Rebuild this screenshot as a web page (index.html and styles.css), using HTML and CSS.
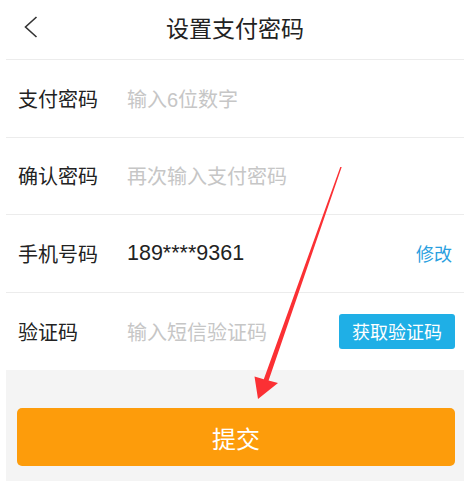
FILE: index.html
```html
<!DOCTYPE html>
<html lang="zh-CN">
<head>
<meta charset="utf-8">
<title>设置支付密码</title>
<link rel="stylesheet" href="styles.css">
</head>
<body>
<div class="page">
  <header class="nav">
    <svg class="back" width="14" height="22" viewBox="0 0 14 22"><polyline points="12.5,1 1.5,11 12.5,21" fill="none" stroke="#333" stroke-width="1.6"/></svg>
    <h1 class="title">设置支付密码</h1>
  </header>
  <div class="row">
    <span class="label">支付密码</span>
    <span class="value placeholder">输入6位数字</span>
  </div>
  <div class="row">
    <span class="label">确认密码</span>
    <span class="value placeholder">再次输入支付密码</span>
  </div>
  <div class="row">
    <span class="label">手机号码</span>
    <span class="value phone">189****9361</span>
    <span class="link">修改</span>
  </div>
  <div class="row last">
    <span class="label">验证码</span>
    <span class="value placeholder">输入短信验证码</span>
    <span class="code-btn">获取验证码</span>
  </div>
  <div class="footer">
    <div class="submit">提交</div>
  </div>
  <svg class="arrow" width="464" height="481" viewBox="0 0 464 481"><polygon points="340.3,167 341.7,167 268.6,380.6 278,383 258,399 254.5,376.5 263.8,379.2" fill="#fb3034"/></svg>
</div>
</body>
</html>
```

FILE: styles.css
```css
html, body {
  margin: 0;
  padding: 0;
  background: #fff;
}
body {
  font-family: "Liberation Sans", "Noto Sans CJK SC", sans-serif;
  color: #222;
  width: 464px;
  height: 481px;
  overflow: hidden;
}
.page {
  position: relative;
  margin-left: 6px;
  height: 481px;
  display: flex;
  flex-direction: column;
}
.nav {
  position: relative;
  height: 60px;
  flex: none;
  border-bottom: 1px solid #ececec;
  box-sizing: border-box;
  display: flex;
  align-items: center;
  justify-content: center;
}
.back {
  position: absolute;
  left: 18px;
  top: 16px;
}
.title {
  margin: 0;
  font-size: 23px;
  font-weight: normal;
  color: #222;
  line-height: 1;
  padding-top: 0;
}
.row {
  height: 77.5px;
  flex: none;
  border-bottom: 1px solid #ececec;
  box-sizing: border-box;
  display: flex;
  align-items: center;
  padding: 0 9px 0 12px;
}
.row.last {
  border-bottom: none;
}
.label {
  width: 109px;
  font-size: 20px;
  color: #222;
}
.value {
  flex: 1;
  font-size: 20px;
}
.placeholder {
  color: #c6c6c6;
}
.phone {
  font-size: 21.5px;
  color: #222;
}
.link {
  color: #2a9fe0;
  font-size: 18px;
  margin-right: 3px;
}
.code-btn {
  background: #1fafe6;
  color: #fff;
  font-size: 18px;
  height: 35px;
  width: 116px;
  border-radius: 3px;
  display: flex;
  align-items: center;
  justify-content: center;
}
.footer {
  flex: 1;
  background: #f4f4f4;
  padding: 38px 9px 0 11px;
}
.submit {
  height: 58px;
  background: #fd9c0b;
  border-radius: 5px;
  color: #fff;
  font-size: 24px;
  display: flex;
  align-items: center;
  justify-content: center;
}
.arrow {
  position: absolute;
  left: -6px;
  top: 0;
  pointer-events: none;
}
```
